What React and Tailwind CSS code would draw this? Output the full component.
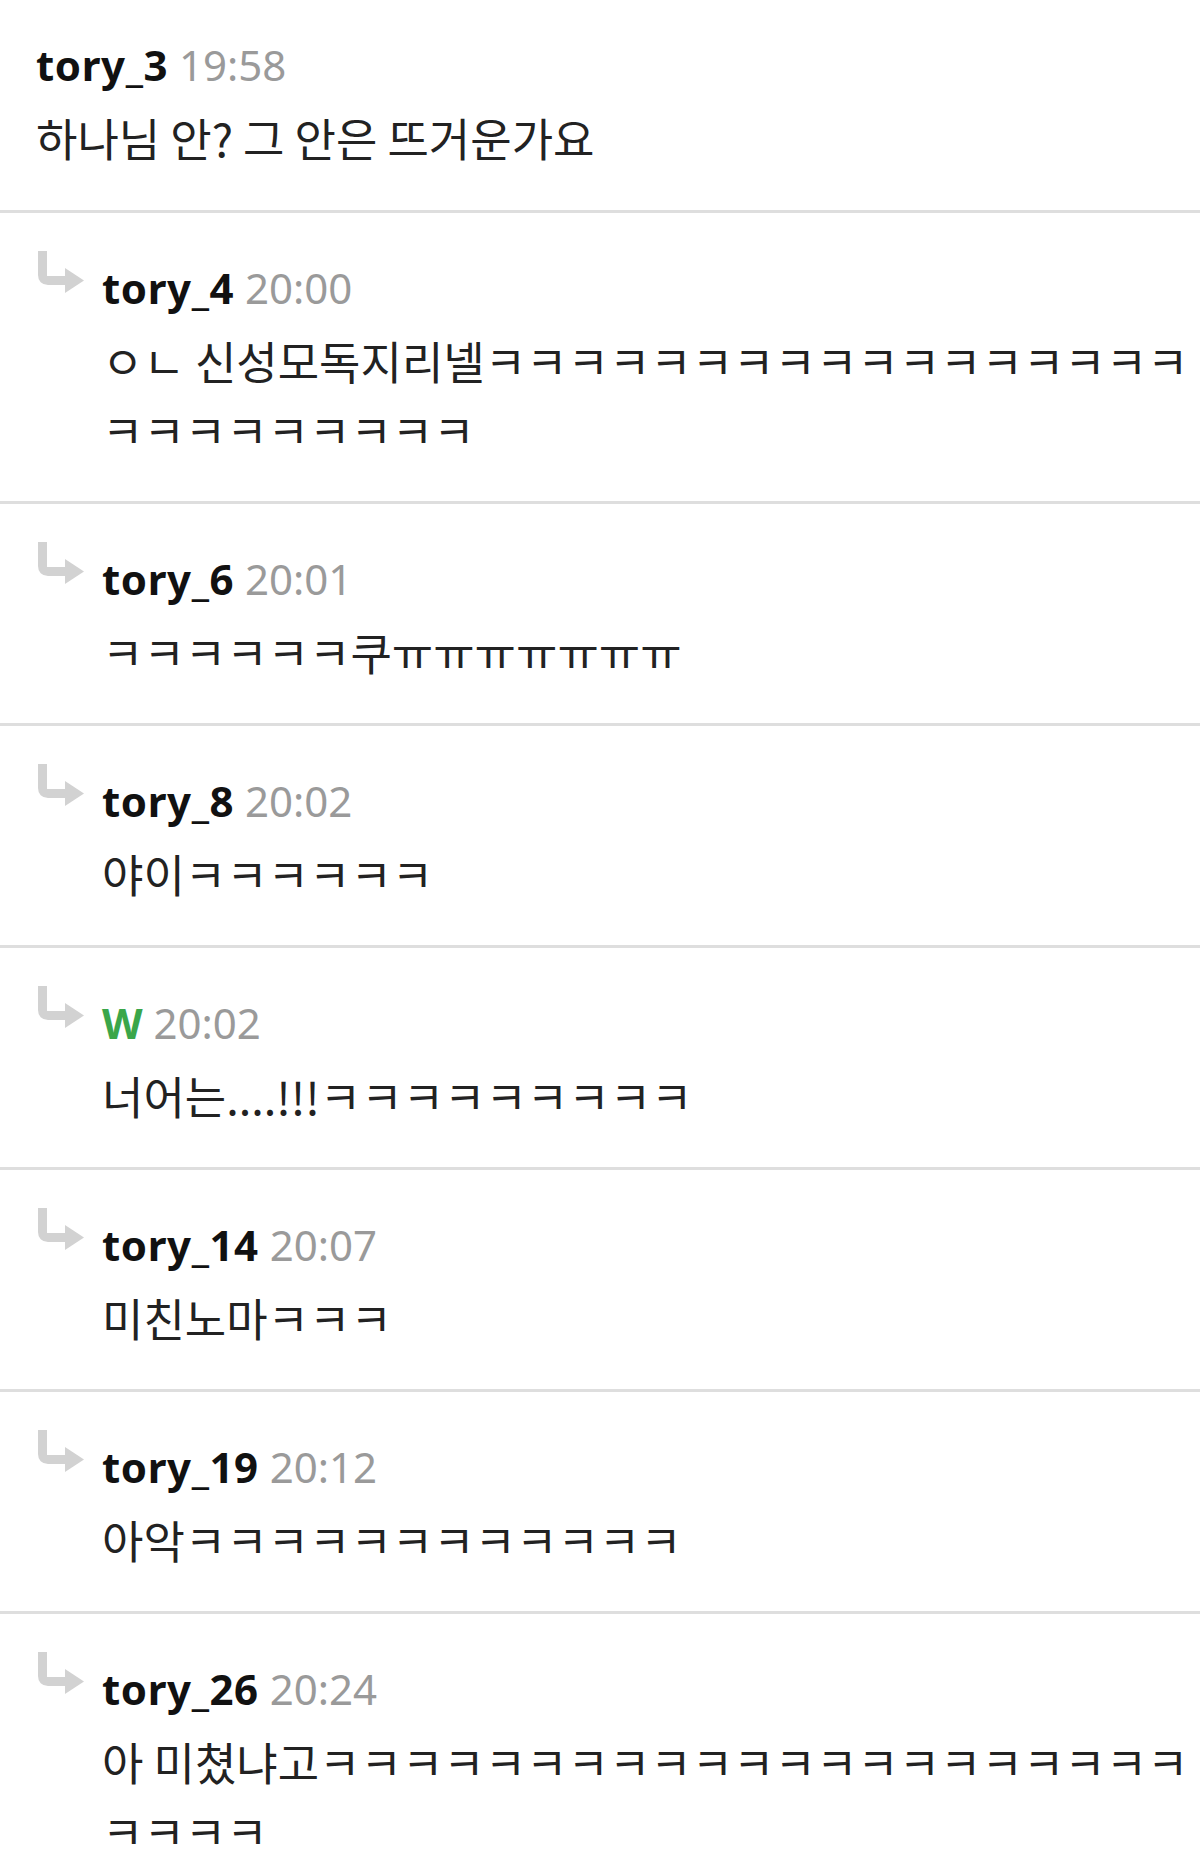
const comments = [
    { name: "tory_3", time: "19:58", text: "하나님 안? 그 안은 뜨거운가요", reply: false },
    { name: "tory_4", time: "20:00", text: "ㅇㄴ 신성모독지리넬ㅋㅋㅋㅋㅋㅋㅋㅋㅋㅋㅋㅋㅋㅋㅋㅋㅋㅋㅋㅋㅋㅋㅋㅋㅋㅋ", reply: true },
    { name: "tory_6", time: "20:01", text: "ㅋㅋㅋㅋㅋㅋ쿠ㅠㅠㅠㅠㅠㅠㅠ", reply: true },
    { name: "tory_8", time: "20:02", text: "야이ㅋㅋㅋㅋㅋㅋ", reply: true },
    { name: "W", time: "20:02", text: "너어는....!!!ㅋㅋㅋㅋㅋㅋㅋㅋㅋ", reply: true, writer: true },
    { name: "tory_14", time: "20:07", text: "미친노마ㅋㅋㅋ", reply: true },
    { name: "tory_19", time: "20:12", text: "아악ㅋㅋㅋㅋㅋㅋㅋㅋㅋㅋㅋㅋ", reply: true },
    { name: "tory_26", time: "20:24", text: "아 미쳤냐고ㅋㅋㅋㅋㅋㅋㅋㅋㅋㅋㅋㅋㅋㅋㅋㅋㅋㅋㅋㅋㅋㅋㅋㅋㅋ", reply: true },
]

function ReplyArrow() {
    return (
        <svg width="48" height="46" viewBox="0 0 48 46" className="shrink-0">
            <path d="M6.5 0 V24 Q6.5 29.5 12 29.5 H31" stroke="#d2d2d2" strokeWidth="9" fill="none" />
            <polygon points="29,17 48,29.5 29,42" fill="#d2d2d2" />
        </svg>
    )
}

function Header({ c }) {
    return (
        <div className="h-[60px] leading-[60px] whitespace-nowrap text-[42px]">
            <span className={c.writer ? "font-bold text-[#3aa64a]" : "font-bold tracking-[0.6px] text-[#111]"}>{c.name}</span>
            <span className="text-[#9a9a9a]"> {c.time}</span>
        </div>
    )
}

function Body({ text }) {
    return (
        <p className="mt-[8px] leading-[69px] text-[45px] text-[#222] font-['Noto_Sans_CJK_KR',sans-serif]">{text}</p>
    )
}

export default function App() {
    return (
        <div className="bg-white min-h-screen font-['Noto_Sans','Noto_Sans_CJK_KR',sans-serif]">
            {comments.map((c, i) => (
                <div key={i} className="border-b-[3px] border-[#dedede]">
                    {!c.reply && (
                        <div className="pt-[35px] pb-[38px] pl-[36px]">
                            <Header c={c} />
                            <Body text={c.text} />
                        </div>
                    )}
                    {c.reply && (
                        <div className="flex pt-[38px] pb-[37px] pl-[36px]">
                            <div className="w-[66px] shrink-0">
                                <ReplyArrow />
                            </div>
                            <div className="pt-[7px] min-w-0 flex-1">
                                <Header c={c} />
                                <Body text={c.text} />
                            </div>
                        </div>
                    )}
                </div>
            ))}
        </div>
    )
}
